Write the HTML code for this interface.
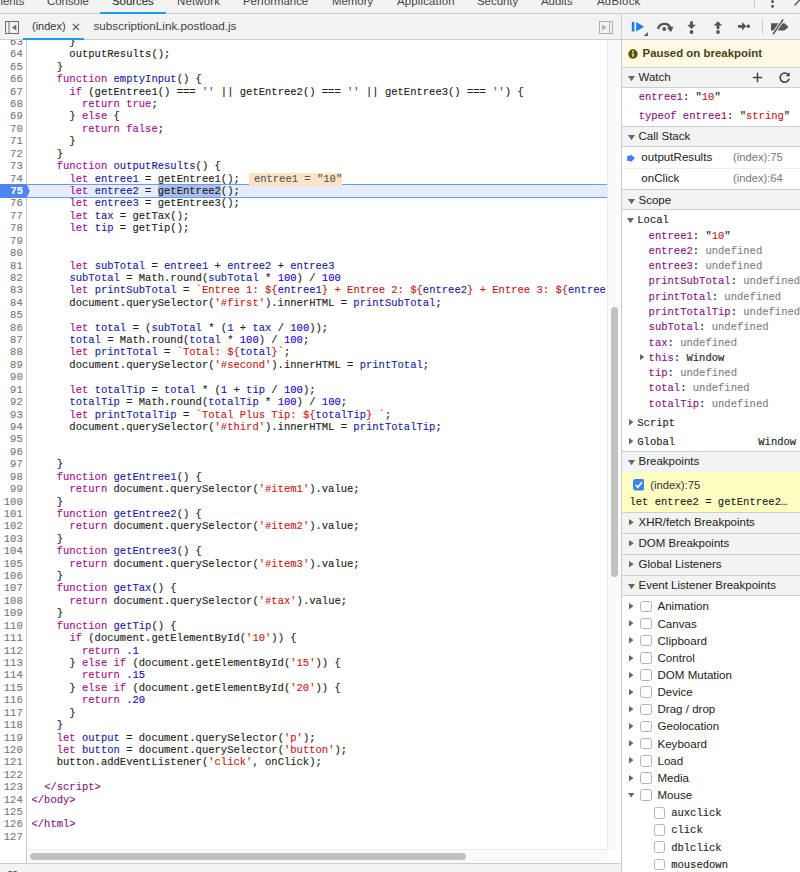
<!DOCTYPE html>
<html><head><meta charset="utf-8"><title>DevTools</title>
<style>
*{box-sizing:border-box}
html,body{margin:0;padding:0}
body{width:800px;height:872px;overflow:hidden;position:relative;background:#fff;font-family:"Liberation Sans",sans-serif;font-size:11.5px;color:#303942}
.abs{position:absolute}
#top{left:0;top:0;width:800px;height:14px;background:#f3f3f3;border-bottom:1px solid #cdcdcd;overflow:hidden}
#top span{position:absolute;top:-6px;font-size:11.4px;line-height:14px;color:#444;white-space:nowrap}
#top span.on{color:#222}
#tb{left:0;top:14px;width:800px;height:26px;background:#f3f3f3;border-bottom:1px solid #cdcdcd}
#vdiv{left:621px;top:14px;width:1px;height:858px;background:#cdcdcd}
.mono{font-family:"Liberation Mono","DejaVu Sans Mono",monospace;-webkit-text-stroke:0.12px}
#gutter{left:0;top:40px;width:27px;height:823px;background:#fff;border-right:1px solid #c8c8c8;overflow:hidden}
#gutter .in{position:absolute;left:0;top:-4.1px;width:27px;font-size:10.5px;line-height:12.4219px;text-align:right;color:#767676}
#gutter .in div{height:12.4219px;padding-right:4.3px}
#gutter .in div.bp{color:transparent}
#code{left:27px;top:40px;width:579.4px;height:809px;overflow:hidden}
#code .in{position:absolute;left:4.5px;top:-4.1px;width:900px;font-size:10.52px;line-height:12.4219px;white-space:pre;color:#222}
#code .in div{height:12.4219px}
.k{color:#a30d8b}.a{color:#a30d8b}.s{color:#c41a16}.n{color:#1c00cf}.d{color:#1b1b9e}.v{color:#1b1b9e}.t{color:#881280}
.iv{background:#ffe3c7;color:#555;margin-left:9.3px;padding:0 0.2px 1px 4.8px}
.sel{background:#a9bde9}
#exline{left:27px;top:184px;width:580px;height:14px;background:#e6ecfb;border-top:1px solid #6b9cf5;border-bottom:1px solid #6b9cf5}
.r{height:16px;line-height:16px;white-space:nowrap}
.hd{left:622px;width:178px;background:#f3f3f3;border-top:1px solid #cdcdcd}
.cb{background:#fff;border:1px solid #b4b4b4;border-radius:2.5px}
</style></head><body>

<div id="top" class="abs">
<span style="left:-23px">Elements</span>
<span style="left:47px">Console</span>
<span class="on" style="left:112px">Sources</span>
<span style="left:177px;letter-spacing:0.2px">Network</span>
<span style="left:243px">Performance</span>
<span style="left:332px">Memory</span>
<span style="left:397px;letter-spacing:0.18px">Application</span>
<span style="left:477px">Security</span>
<span style="left:541px">Audits</span>
<span style="left:597px;letter-spacing:0.25px">AdBlock</span>
<div class="abs" style="left:754px;top:0;width:1px;height:8px;background:#ccc"></div>
</div>

<div id="tb" class="abs">
<div class="abs" style="left:100.3px;top:-2.4px;width:65.4px;height:2.6px;background:#1a9bf0;z-index:2"></div>
<span class="abs" style="left:32px;top:5px;line-height:14px;font-size:11px;color:#333">(index)</span>
<svg class="abs" style="left:72px;top:9px" width="8" height="8" viewBox="0 0 8 8"><path d="M0.8 0.9L7 7.1M7 0.9L0.8 7.1" stroke="#555" stroke-width="1.15" fill="none"/></svg>
<span class="abs" style="left:93.5px;top:5px;line-height:14px;font-size:11.7px;color:#444;white-space:nowrap">subscriptionLink.postload.js</span>
<div class="abs" style="left:23px;top:23.5px;width:61px;height:2.5px;background:#1a9bf0"></div>
</div>

<div id="exline" class="abs"></div>
<div id="code" class="abs mono"><div class="in"><div>      }</div><div>      outputResults();</div><div>    }</div><div>    <span class="k">function</span> <span class="d">emptyInput</span>() {</div><div>      <span class="k">if</span> (getEntree1() === <span class="s">''</span> || getEntree2() === <span class="s">''</span> || getEntree3() === <span class="s">''</span>) {</div><div>        <span class="k">return</span> <span class="a">true</span>;</div><div>      } <span class="k">else</span> {</div><div>        <span class="k">return</span> <span class="a">false</span>;</div><div>      }</div><div>    }</div><div>    <span class="k">function</span> <span class="d">outputResults</span>() {</div><div>      <span class="k">let</span> <span class="d">entree1</span> = getEntree1();<span class="iv">entree1 = "10"</span></div><div class="ex">      <span class="k">let</span> <span class="d">entree2</span> = <span class="sel">getEntree2</span>();</div><div>      <span class="k">let</span> <span class="d">entree3</span> = getEntree3();</div><div>      <span class="k">let</span> <span class="d">tax</span> = getTax();</div><div>      <span class="k">let</span> <span class="d">tip</span> = getTip();</div><div></div><div></div><div>      <span class="k">let</span> <span class="d">subTotal</span> = <span class="v">entree1</span> + <span class="v">entree2</span> + <span class="v">entree3</span></div><div>      <span class="v">subTotal</span> = Math.round(<span class="v">subTotal</span> * <span class="n">100</span>) / <span class="n">100</span></div><div>      <span class="k">let</span> <span class="d">printSubTotal</span> = <span class="s">`Entree 1: </span><span class="s">${</span><span class="v">entree1</span><span class="s">}</span><span class="s"> + Entree 2: </span><span class="s">${</span><span class="v">entree2</span><span class="s">}</span><span class="s"> + Entree 3: </span><span class="s">${</span><span class="v">entree3</span><span class="s">}</span><span class="s">`</span>;</div><div>      document.querySelector(<span class="s">'#first'</span>).innerHTML = <span class="v">printSubTotal</span>;</div><div></div><div>      <span class="k">let</span> <span class="d">total</span> = (<span class="v">subTotal</span> * (<span class="n">1</span> + <span class="v">tax</span> / <span class="n">100</span>));</div><div>      <span class="v">total</span> = Math.round(<span class="v">total</span> * <span class="n">100</span>) / <span class="n">100</span>;</div><div>      <span class="k">let</span> <span class="d">printTotal</span> = <span class="s">`Total: </span><span class="s">${</span><span class="v">total</span><span class="s">}</span><span class="s">`</span>;</div><div>      document.querySelector(<span class="s">'#second'</span>).innerHTML = <span class="v">printTotal</span>;</div><div></div><div>      <span class="k">let</span> <span class="d">totalTip</span> = <span class="v">total</span> * (<span class="n">1</span> + <span class="v">tip</span> / <span class="n">100</span>);</div><div>      <span class="v">totalTip</span> = Math.round(<span class="v">totalTip</span> * <span class="n">100</span>) / <span class="n">100</span>;</div><div>      <span class="k">let</span> <span class="d">printTotalTip</span> = <span class="s">`Total Plus Tip: </span><span class="s">${</span><span class="v">totalTip</span><span class="s">}</span><span class="s"> `</span>;</div><div>      document.querySelector(<span class="s">'#third'</span>).innerHTML = <span class="v">printTotalTip</span>;</div><div></div><div></div><div>    }</div><div>    <span class="k">function</span> <span class="d">getEntree1</span>() {</div><div>      <span class="k">return</span> document.querySelector(<span class="s">'#item1'</span>).value;</div><div>    }</div><div>    <span class="k">function</span> <span class="d">getEntree2</span>() {</div><div>      <span class="k">return</span> document.querySelector(<span class="s">'#item2'</span>).value;</div><div>    }</div><div>    <span class="k">function</span> <span class="d">getEntree3</span>() {</div><div>      <span class="k">return</span> document.querySelector(<span class="s">'#item3'</span>).value;</div><div>    }</div><div>    <span class="k">function</span> <span class="d">getTax</span>() {</div><div>      <span class="k">return</span> document.querySelector(<span class="s">'#tax'</span>).value;</div><div>    }</div><div>    <span class="k">function</span> <span class="d">getTip</span>() {</div><div>      <span class="k">if</span> (document.getElementById(<span class="s">'10'</span>)) {</div><div>        <span class="k">return</span> <span class="n">.1</span></div><div>      } <span class="k">else</span> <span class="k">if</span> (document.getElementById(<span class="s">'15'</span>)) {</div><div>        <span class="k">return</span> <span class="n">.15</span></div><div>      } <span class="k">else</span> <span class="k">if</span> (document.getElementById(<span class="s">'20'</span>)) {</div><div>        <span class="k">return</span> <span class="n">.20</span></div><div>      }</div><div>    }</div><div>    <span class="k">let</span> <span class="d">output</span> = document.querySelector(<span class="s">'p'</span>);</div><div>    <span class="k">let</span> <span class="d">button</span> = document.querySelector(<span class="s">'button'</span>);</div><div>    button.addEventListener(<span class="s">'click'</span>, onClick);</div><div></div><div>  <span class="t">&lt;/script&gt;</span></div><div><span class="t">&lt;/body&gt;</span></div><div></div><div><span class="t">&lt;/html&gt;</span></div><div></div></div></div>
<div id="gutter" class="abs mono"><div class="in"><div>63</div><div>64</div><div>65</div><div>66</div><div>67</div><div>68</div><div>69</div><div>70</div><div>71</div><div>72</div><div>73</div><div>74</div><div class="bp">75</div><div>76</div><div>77</div><div>78</div><div>79</div><div>80</div><div>81</div><div>82</div><div>83</div><div>84</div><div>85</div><div>86</div><div>87</div><div>88</div><div>89</div><div>90</div><div>91</div><div>92</div><div>93</div><div>94</div><div>95</div><div>96</div><div>97</div><div>98</div><div>99</div><div>100</div><div>101</div><div>102</div><div>103</div><div>104</div><div>105</div><div>106</div><div>107</div><div>108</div><div>109</div><div>110</div><div>111</div><div>112</div><div>113</div><div>114</div><div>115</div><div>116</div><div>117</div><div>118</div><div>119</div><div>120</div><div>121</div><div>122</div><div>123</div><div>124</div><div>125</div><div>126</div><div>127</div></div></div>

<svg class="abs" style="left:0;top:184px" width="32" height="14" viewBox="0 0 32 14"><path d="M0 0H26.5L29.8 7L26.5 14H0Z" fill="#4d86ef"/></svg>
<div class="abs mono" style="left:0;top:184.5px;width:26px;padding-right:3px;text-align:right;font-size:10.5px;line-height:12.4219px;color:#fff;font-weight:bold">75</div>

<!-- vertical scrollbar -->
<div class="abs" style="left:607px;top:40px;width:14px;height:810px;background:#fafafa;border-left:1px solid #e9e9e9"></div>
<div class="abs" style="left:610.6px;top:307px;width:7.3px;height:269.5px;border-radius:3.65px;background:#c1c1c1"></div>
<!-- horizontal scrollbar -->
<div class="abs" style="left:27px;top:849px;width:580px;height:14px;background:#fafafa;border-top:1px solid #e9e9e9"></div>
<div class="abs" style="left:30px;top:853.1px;width:436px;height:7.3px;border-radius:3.65px;background:#c1c1c1"></div>
<!-- status bar -->
<div class="abs" style="left:0;top:863px;width:621px;height:9px;background:#f3f3f3;border-top:1px solid #cdcdcd"></div>
<div class="abs mono" style="left:6px;top:869.5px;font-size:11px;line-height:12px;color:#555;font-weight:bold">{}</div>
<div class="abs" style="left:32px;top:870px;font-size:11.5px;line-height:12px;color:#555;white-space:nowrap">Line 75, Column 21</div>
<!-- navigator toggle icons -->
<svg class="abs" style="left:5px;top:21px" width="14" height="13" viewBox="0 0 14 13"><rect x="0.5" y="0.5" width="13" height="12" fill="none" stroke="#6e6e6e"/><path d="M4 0.5V12.5" stroke="#6e6e6e"/><path d="M11.3 3.4V9.6L6.9 6.5Z" fill="#6e6e6e"/></svg>
<svg class="abs" style="left:599px;top:21px" width="14" height="13" viewBox="0 0 14 13"><rect x="0.5" y="0.5" width="13" height="12" fill="none" stroke="#b0b0b0"/><path d="M10.5 0.5V12.5" stroke="#b0b0b0"/><path d="M3 3.4V9.6L7.6 6.5Z" fill="#b0b0b0"/></svg>
<!-- debugger toolbar icons -->
<svg class="abs" style="left:622px;top:14px" width="178" height="25" viewBox="622 14 178 25">
<rect x="631.8" y="22" width="2.6" height="9.5" fill="#1a7ff2"/><path d="M636.2 22L644 26.75L636.2 31.5Z" fill="#1a7ff2"/>
<path d="M647.8 32V36H643.8Z" fill="#555"/>
<path d="M658 29A6.6 6.6 0 0 1 670.6 28.2" stroke="#555" stroke-width="2.3" fill="none"/><path d="M666.9 27.4L673.6 26.4L670.9 32.2Z" fill="#555"/><circle cx="664.2" cy="29" r="1.9" fill="#555"/>
<path d="M690.1 21.3H692.9V24.7H695.8L691.5 29L687.2 24.7H690.1Z" fill="#555"/><circle cx="691.5" cy="32" r="1.9" fill="#555"/>
<path d="M716.6 29H719.4V25.6H722.3L718 21.3L713.7 25.6H716.6Z" fill="#555"/><circle cx="718" cy="32" r="1.9" fill="#555"/>
<path d="M738 24.9H742V22.1L746.3 26.3L742 30.5V27.7H738Z" fill="#555"/><circle cx="748.3" cy="26.3" r="1.8" fill="#555"/>
<path d="M762.5 19.5V34" stroke="#ccc" stroke-width="1"/>
<path d="M771 23.2H784.5L788.5 26.9L784.5 30.6H771Z" fill="#555"/><path d="M773 34.2L783.2 19.4" stroke="#f3f3f3" stroke-width="3.4"/><path d="M773 34.2L783.2 19.4" stroke="#555" stroke-width="1.5"/>
</svg>
<!-- top right -->
<svg class="abs" style="left:760px;top:0" width="40" height="13" viewBox="760 0 40 13"><circle cx="772.5" cy="1.5" r="1.5" fill="#5a5a5a"/><circle cx="772.5" cy="6.3" r="1.5" fill="#5a5a5a"/><path d="M794.6 5.2L801 -1.2" stroke="#5a5a5a" stroke-width="1.5"/></svg>
<div id="vdiv" class="abs"></div>

<div class="abs" style="left:622px;top:40px;width:178px;height:27px;background:#fffae6"></div>
<svg class="abs" style="left:627.5px;top:48.5px" width="10" height="10" viewBox="0 0 10 10"><circle cx="5" cy="5" r="4.7" fill="#5c5200"/><rect x="4.3" y="4.2" width="1.4" height="3.5" fill="#fffae6"/><circle cx="5" cy="2.6" r="0.9" fill="#fffae6"/></svg>
<div class="abs r" style="left:642.5px;top:44.83px;font-size:11.45px;color:#4b4110;font-weight:bold">Paused on breakpoint</div>
<div class="abs hd" style="top:67px;height:21px;border-bottom:1px solid #cdcdcd"></div><svg class="abs" style="left:628px;top:75.6px" width="7" height="5.2" viewBox="0 0 7 5.2"><path d="M0 0H7L3.5 5.2Z" fill="#666"/></svg><div class="abs r" style="left:638.5px;top:68.62px;font-size:11.5px;color:#222;">Watch</div>
<svg class="abs" style="left:752px;top:72px" width="11" height="11" viewBox="0 0 11 11"><path d="M5.5 0.8V10.2M0.8 5.5H10.2" stroke="#444" stroke-width="1.5" fill="none"/></svg>
<svg class="abs" style="left:778px;top:71px" width="13" height="13" viewBox="0 0 13 13"><path d="M10.6 4.2A4.6 4.6 0 1 0 11.2 7.6" stroke="#444" stroke-width="1.6" fill="none"/><path d="M11.6 1.2V5.2H7.6Z" fill="#444"/></svg>
<div class="abs r mono" style="left:638.7px;top:88.9px;font-size:10.52px;color:#222;"><span style="color:#881280">entree1</span>: "<span style="color:#c41a16">10</span>"</div>
<div class="abs r mono" style="left:638.7px;top:108.1px;font-size:10.52px;color:#222;"><span style="color:#881280">typeof entree1</span>: "<span style="color:#c41a16">string</span>"</div>
<div class="abs hd" style="top:126px;height:21px;border-bottom:1px solid #cdcdcd"></div><svg class="abs" style="left:628px;top:135.3px" width="7" height="5.2" viewBox="0 0 7 5.2"><path d="M0 0H7L3.5 5.2Z" fill="#666"/></svg><div class="abs r" style="left:638.5px;top:128.32px;font-size:11.5px;color:#222;">Call Stack</div>
<svg class="abs" style="left:626.5px;top:154px" width="8" height="9" viewBox="0 0 8 9"><path d="M0.2 1.7H3.6V0L7.8 4.3L3.6 8.6V6.9H0.2Z" fill="#3d7cf4"/></svg>
<div class="abs r" style="left:641.3px;top:148.98px;font-size:11.6px;color:#222;">outputResults</div>
<div class="abs r" style="left:733px;top:149.12px;font-size:11.2px;color:#777;">(index):75</div>
<div class="abs" style="left:622px;top:168px;width:178px;height:1px;background:#efefef"></div>
<div class="abs r" style="left:641.3px;top:169.88px;font-size:11.6px;color:#222;">onClick</div>
<div class="abs r" style="left:733px;top:170.02px;font-size:11.2px;color:#777;">(index):64</div>
<div class="abs hd" style="top:189px;height:21px;border-bottom:1px solid #cdcdcd"></div><svg class="abs" style="left:628px;top:198.5px" width="7" height="5.2" viewBox="0 0 7 5.2"><path d="M0 0H7L3.5 5.2Z" fill="#666"/></svg><div class="abs r" style="left:638.5px;top:191.52px;font-size:11.5px;color:#222;">Scope</div>
<svg class="abs" style="left:627.2px;top:218px" width="7" height="5.2" viewBox="0 0 7 5.2"><path d="M0 0H7L3.5 5.2Z" fill="#666"/></svg>
<div class="abs r mono" style="left:637.3px;top:212.3px;font-size:10.52px;color:#222;">Local</div>
<div class="abs r mono" style="left:648.6px;top:227.59px;font-size:10.52px;color:#222;"><span style="color:#881280">entree1</span>: "<span style="color:#c41a16">10</span>"</div>
<div class="abs r mono" style="left:648.6px;top:242.88px;font-size:10.52px;color:#222;"><span style="color:#881280">entree2</span>: <span style="color:#808080">undefined</span></div>
<div class="abs r mono" style="left:648.6px;top:258.17px;font-size:10.52px;color:#222;"><span style="color:#881280">entree3</span>: <span style="color:#808080">undefined</span></div>
<div class="abs r mono" style="left:648.6px;top:273.46px;font-size:10.52px;color:#222;"><span style="color:#881280">printSubTotal</span>: <span style="color:#808080">undefined</span></div>
<div class="abs r mono" style="left:648.6px;top:288.75px;font-size:10.52px;color:#222;"><span style="color:#881280">printTotal</span>: <span style="color:#808080">undefined</span></div>
<div class="abs r mono" style="left:648.6px;top:304.04px;font-size:10.52px;color:#222;"><span style="color:#881280">printTotalTip</span>: <span style="color:#808080">undefined</span></div>
<div class="abs r mono" style="left:648.6px;top:319.33px;font-size:10.52px;color:#222;"><span style="color:#881280">subTotal</span>: <span style="color:#808080">undefined</span></div>
<div class="abs r mono" style="left:648.6px;top:334.62px;font-size:10.52px;color:#222;"><span style="color:#881280">tax</span>: <span style="color:#808080">undefined</span></div>
<div class="abs r mono" style="left:648.6px;top:349.91px;font-size:10.52px;color:#222;"><span style="color:#881280">this</span>: Window</div>
<svg class="abs" style="left:640px;top:353.90999999999997px" width="4.4" height="6.2" viewBox="0 0 4.4 6.2"><path d="M0 0L4.4 3.1L0 6.2Z" fill="#666"/></svg>
<div class="abs r mono" style="left:648.6px;top:365.2px;font-size:10.52px;color:#222;"><span style="color:#881280">tip</span>: <span style="color:#808080">undefined</span></div>
<div class="abs r mono" style="left:648.6px;top:380.49px;font-size:10.52px;color:#222;"><span style="color:#881280">total</span>: <span style="color:#808080">undefined</span></div>
<div class="abs r mono" style="left:648.6px;top:395.78px;font-size:10.52px;color:#222;"><span style="color:#881280">totalTip</span>: <span style="color:#808080">undefined</span></div>
<svg class="abs" style="left:628.5px;top:419.20000000000005px" width="4.6" height="6.4" viewBox="0 0 4.6 6.4"><path d="M0 0L4.6 3.2L0 6.4Z" fill="#666"/></svg>
<div class="abs r mono" style="left:637.3px;top:415.3px;font-size:10.52px;color:#222;">Script</div>
<svg class="abs" style="left:628.5px;top:438.20000000000005px" width="4.6" height="6.4" viewBox="0 0 4.6 6.4"><path d="M0 0L4.6 3.2L0 6.4Z" fill="#666"/></svg>
<div class="abs r mono" style="left:637.3px;top:434.3px;font-size:10.52px;color:#222;">Global</div>
<div class="abs r mono" style="left:758.3px;top:434.3px;font-size:10.52px;color:#222;">Window</div>
<div class="abs hd" style="top:451px;height:21px"></div><svg class="abs" style="left:628px;top:460.0px" width="7" height="5.2" viewBox="0 0 7 5.2"><path d="M0 0H7L3.5 5.2Z" fill="#666"/></svg><div class="abs r" style="left:638.5px;top:453.02px;font-size:11.5px;color:#222;">Breakpoints</div>
<div class="abs" style="left:622px;top:472px;width:178px;height:40px;background:#ffffc2"></div>
<svg class="abs" style="left:632.5px;top:479.2px" width="11.5" height="11.5" viewBox="0 0 11.5 11.5"><rect x="0" y="0" width="11.5" height="11.5" rx="2.4" fill="#3a83f7"/><path d="M2.7 6L4.8 8.2L8.9 3.2" stroke="#fff" stroke-width="1.7" fill="none"/></svg>
<div class="abs r" style="left:650.2px;top:476.8px;font-size:11.25px;color:#333;">(index):75</div>
<div class="abs r mono" style="left:629.5px;top:493.6px;font-size:10.52px;color:#222;">let entree2 = getEntree2…</div>
<div class="abs hd" style="top:512px;height:21px"></div><svg class="abs" style="left:629px;top:519.0px" width="4.8" height="6.4" viewBox="0 0 4.8 6.4"><path d="M0 0L4.8 3.2L0 6.4Z" fill="#666"/></svg><div class="abs r" style="left:638.5px;top:514.02px;font-size:11.5px;color:#222;">XHR/fetch Breakpoints</div>
<div class="abs hd" style="top:533px;height:21px"></div><svg class="abs" style="left:629px;top:540.0px" width="4.8" height="6.4" viewBox="0 0 4.8 6.4"><path d="M0 0L4.8 3.2L0 6.4Z" fill="#666"/></svg><div class="abs r" style="left:638.5px;top:535.02px;font-size:11.5px;color:#222;">DOM Breakpoints</div>
<div class="abs hd" style="top:554px;height:21px"></div><svg class="abs" style="left:629px;top:561.0px" width="4.8" height="6.4" viewBox="0 0 4.8 6.4"><path d="M0 0L4.8 3.2L0 6.4Z" fill="#666"/></svg><div class="abs r" style="left:638.5px;top:556.02px;font-size:11.5px;color:#222;">Global Listeners</div>
<div class="abs hd" style="top:575px;height:21px;border-bottom:1px solid #cdcdcd"></div><svg class="abs" style="left:628px;top:584.0px" width="7" height="5.2" viewBox="0 0 7 5.2"><path d="M0 0H7L3.5 5.2Z" fill="#666"/></svg><div class="abs r" style="left:638.5px;top:577.02px;font-size:11.5px;color:#222;">Event Listener Breakpoints</div>
<svg class="abs" style="left:628.8px;top:603.05px" width="4.6" height="6.4" viewBox="0 0 4.6 6.4"><path d="M0 0L4.6 3.2L0 6.4Z" fill="#666"/></svg>
<div class="abs cb" style="left:640px;top:600.65px;width:11.5px;height:11.5px"></div>
<div class="abs r" style="left:657.5px;top:598.35px;font-size:11.55px;color:#222;">Animation</div>
<svg class="abs" style="left:628.8px;top:620.2099999999999px" width="4.6" height="6.4" viewBox="0 0 4.6 6.4"><path d="M0 0L4.6 3.2L0 6.4Z" fill="#666"/></svg>
<div class="abs cb" style="left:640px;top:617.81px;width:11.5px;height:11.5px"></div>
<div class="abs r" style="left:657.5px;top:615.51px;font-size:11.55px;color:#222;">Canvas</div>
<svg class="abs" style="left:628.8px;top:637.37px" width="4.6" height="6.4" viewBox="0 0 4.6 6.4"><path d="M0 0L4.6 3.2L0 6.4Z" fill="#666"/></svg>
<div class="abs cb" style="left:640px;top:634.97px;width:11.5px;height:11.5px"></div>
<div class="abs r" style="left:657.5px;top:632.67px;font-size:11.55px;color:#222;">Clipboard</div>
<svg class="abs" style="left:628.8px;top:654.53px" width="4.6" height="6.4" viewBox="0 0 4.6 6.4"><path d="M0 0L4.6 3.2L0 6.4Z" fill="#666"/></svg>
<div class="abs cb" style="left:640px;top:652.13px;width:11.5px;height:11.5px"></div>
<div class="abs r" style="left:657.5px;top:649.83px;font-size:11.55px;color:#222;">Control</div>
<svg class="abs" style="left:628.8px;top:671.6899999999999px" width="4.6" height="6.4" viewBox="0 0 4.6 6.4"><path d="M0 0L4.6 3.2L0 6.4Z" fill="#666"/></svg>
<div class="abs cb" style="left:640px;top:669.29px;width:11.5px;height:11.5px"></div>
<div class="abs r" style="left:657.5px;top:666.99px;font-size:11.55px;color:#222;">DOM Mutation</div>
<svg class="abs" style="left:628.8px;top:688.8499999999999px" width="4.6" height="6.4" viewBox="0 0 4.6 6.4"><path d="M0 0L4.6 3.2L0 6.4Z" fill="#666"/></svg>
<div class="abs cb" style="left:640px;top:686.45px;width:11.5px;height:11.5px"></div>
<div class="abs r" style="left:657.5px;top:684.15px;font-size:11.55px;color:#222;">Device</div>
<svg class="abs" style="left:628.8px;top:706.01px" width="4.6" height="6.4" viewBox="0 0 4.6 6.4"><path d="M0 0L4.6 3.2L0 6.4Z" fill="#666"/></svg>
<div class="abs cb" style="left:640px;top:703.61px;width:11.5px;height:11.5px"></div>
<div class="abs r" style="left:657.5px;top:701.31px;font-size:11.55px;color:#222;">Drag / drop</div>
<svg class="abs" style="left:628.8px;top:723.17px" width="4.6" height="6.4" viewBox="0 0 4.6 6.4"><path d="M0 0L4.6 3.2L0 6.4Z" fill="#666"/></svg>
<div class="abs cb" style="left:640px;top:720.77px;width:11.5px;height:11.5px"></div>
<div class="abs r" style="left:657.5px;top:718.47px;font-size:11.55px;color:#222;">Geolocation</div>
<svg class="abs" style="left:628.8px;top:740.3299999999999px" width="4.6" height="6.4" viewBox="0 0 4.6 6.4"><path d="M0 0L4.6 3.2L0 6.4Z" fill="#666"/></svg>
<div class="abs cb" style="left:640px;top:737.93px;width:11.5px;height:11.5px"></div>
<div class="abs r" style="left:657.5px;top:735.63px;font-size:11.55px;color:#222;">Keyboard</div>
<svg class="abs" style="left:628.8px;top:757.49px" width="4.6" height="6.4" viewBox="0 0 4.6 6.4"><path d="M0 0L4.6 3.2L0 6.4Z" fill="#666"/></svg>
<div class="abs cb" style="left:640px;top:755.09px;width:11.5px;height:11.5px"></div>
<div class="abs r" style="left:657.5px;top:752.79px;font-size:11.55px;color:#222;">Load</div>
<svg class="abs" style="left:628.8px;top:774.65px" width="4.6" height="6.4" viewBox="0 0 4.6 6.4"><path d="M0 0L4.6 3.2L0 6.4Z" fill="#666"/></svg>
<div class="abs cb" style="left:640px;top:772.25px;width:11.5px;height:11.5px"></div>
<div class="abs r" style="left:657.5px;top:769.95px;font-size:11.55px;color:#222;">Media</div>
<svg class="abs" style="left:627.8px;top:793.41px" width="6.4" height="4.6" viewBox="0 0 6.4 4.6"><path d="M0 0H6.4L3.2 4.6Z" fill="#666"/></svg>
<div class="abs cb" style="left:640px;top:789.41px;width:11.5px;height:11.5px"></div>
<div class="abs r" style="left:657.5px;top:787.11px;font-size:11.55px;color:#222;">Mouse</div>
<div class="abs cb" style="left:653.8px;top:807.2px;width:11.5px;height:11.5px"></div>
<div class="abs r mono" style="left:671.2px;top:805.3px;font-size:10.52px;color:#222;">auxclick</div>
<div class="abs cb" style="left:653.8px;top:824.3px;width:11.5px;height:11.5px"></div>
<div class="abs r mono" style="left:671.2px;top:822.4px;font-size:10.52px;color:#222;">click</div>
<div class="abs cb" style="left:653.8px;top:841.4px;width:11.5px;height:11.5px"></div>
<div class="abs r mono" style="left:671.2px;top:839.5px;font-size:10.52px;color:#222;">dblclick</div>
<div class="abs cb" style="left:653.8px;top:858.5px;width:11.5px;height:11.5px"></div>
<div class="abs r mono" style="left:671.2px;top:856.6px;font-size:10.52px;color:#222;">mousedown</div>

</body></html>
